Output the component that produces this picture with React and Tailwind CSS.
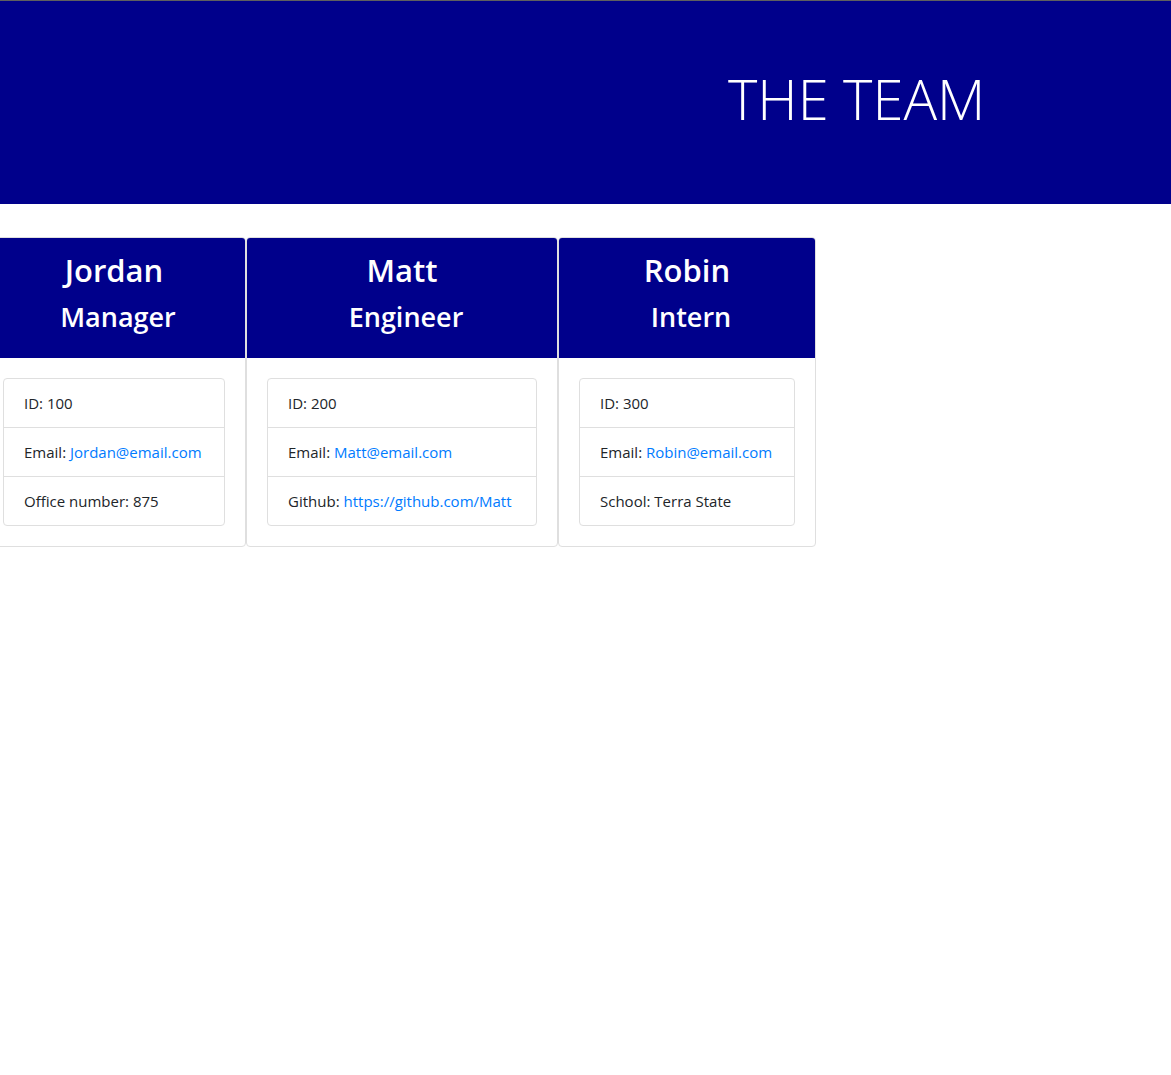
import React from 'react';

// team members shown as cards under the banner
const team = [
  {
    name: 'Jordan',
    role: 'Manager',
    id: 100,
    email: 'Jordan@email.com',
    extra: { label: 'Office number', value: '875' },
    width: 'w-[264px]',
  },
  {
    name: 'Matt',
    role: 'Engineer',
    id: 200,
    email: 'Matt@email.com',
    extra: { label: 'Github', value: 'https://github.com/Matt', link: true },
    width: 'w-[312px]',
  },
  {
    name: 'Robin',
    role: 'Intern',
    id: 300,
    email: 'Robin@email.com',
    extra: { label: 'School', value: 'Terra State' },
    width: 'w-[258px]',
  },
];

const Row = ({ children, last }) => (
  <li className={`whitespace-nowrap px-5 py-3 leading-6 ${last ? '' : 'border-b border-[#dfdfdf]'}`}>{children}</li>
);

const MemberCard = ({ member }) => (
  <div className={`${member.width} shrink-0 rounded border border-[#dfdfdf] bg-white`}>
    {/* Card header: name + role */}
    <div className="flex h-[120px] flex-col items-center rounded-t-[3px] bg-[#00008b] pt-[13px] text-white">
      <h2 className="text-[31px] font-semibold leading-[38px]">{member.name}</h2>
      <h3 className="mt-[11px] pl-2 text-[27px] font-semibold leading-[34px]">{member.role}</h3>
    </div>

    {/* Card body: details list */}
    <div className="p-5">
      <ul className="rounded border border-[#dfdfdf] text-[15px]">
        <Row>ID: {member.id}</Row>
        <Row>
          Email: <a className="text-[#007bff]">{member.email}</a>
        </Row>
        <Row last>
          {member.extra.label}:{' '}
          {member.extra.link ? (
            <a className="text-[#007bff]">{member.extra.value}</a>
          ) : (
            member.extra.value
          )}
        </Row>
      </ul>
    </div>
  </div>
);

const App = () => {
  return (
    <div className="min-h-screen overflow-hidden bg-white font-['Open_Sans','Noto_Sans',sans-serif] text-[#212529]">
      {/* Banner */}
      <header className="border-t border-[#5f5f5f] bg-[#00008b] pb-[72px] pt-16">
        <h1 className="ml-[728px] text-[56px] font-light leading-[67px] text-white">THE TEAM</h1>
      </header>

      {/* Cards */}
      <div className="-ml-[18px] mt-[33px] flex">
        {team.map((member) => (
          <MemberCard key={member.id} member={member} />
        ))}
      </div>
    </div>
  );
};

export default App;
